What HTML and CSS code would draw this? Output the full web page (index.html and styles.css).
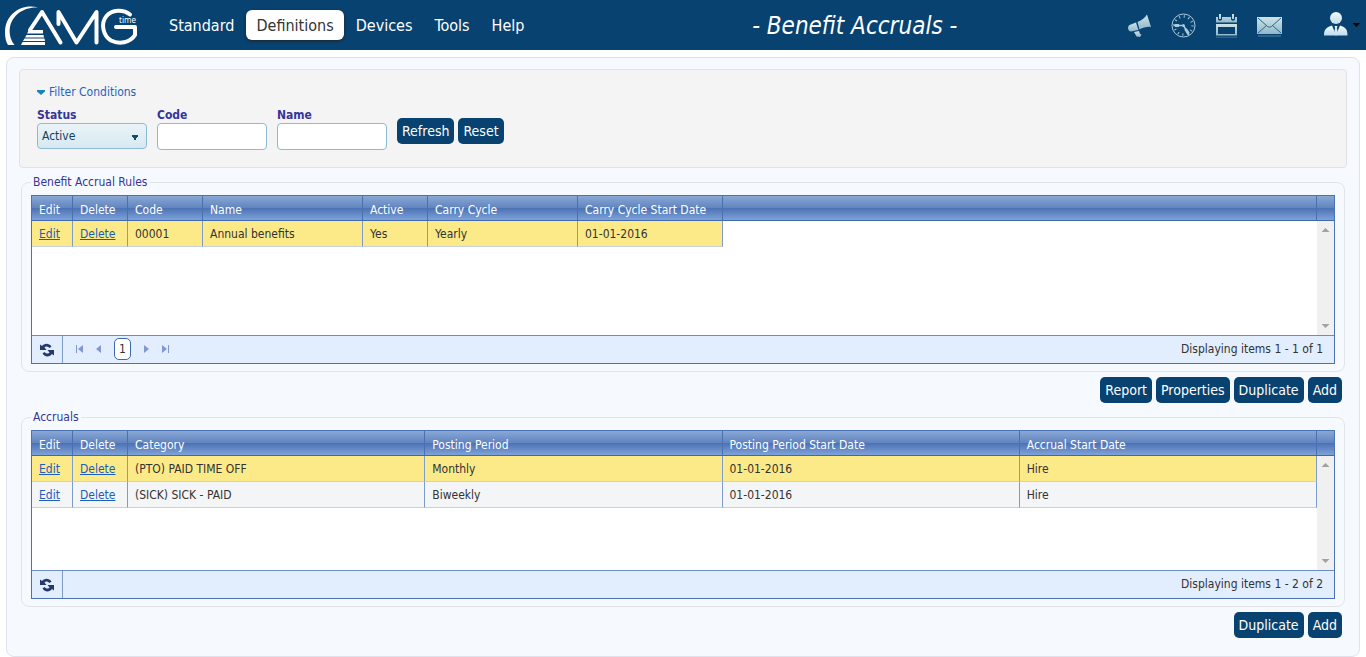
FILE: index.html
```html
<!DOCTYPE html>
<html lang="en">
<head>
<meta charset="utf-8">
<title>Benefit Accruals</title>
<link rel="stylesheet" href="styles.css">
</head>
<body>
<svg class="defs" width="0" height="0" aria-hidden="true">
  <defs>
    <linearGradient id="pale" x1="0" y1="0" x2="0" y2="1">
      <stop offset="0" stop-color="#cfe3e6"/><stop offset="1" stop-color="#8fb8cc"/>
    </linearGradient>
    <linearGradient id="person" x1="0" y1="0" x2="0" y2="1">
      <stop offset="0" stop-color="#f2f9fc"/><stop offset="1" stop-color="#bfdcec"/>
    </linearGradient>
    <symbol id="reload" viewBox="0 0 14 14">
      <path d="M0 1.500 2 3C4 0 9 -0.500 11.500 3.500L9.500 5C7.500 3 5.500 3 4.500 4.500L6.500 7H0Z" fill="#27396b"/>
      <path d="M14 12.500 12 11C10 14 5 14.500 2.500 10.500L4.500 9C6.500 11 8.500 11 9.500 9.500L7.500 7H14Z" fill="#27396b"/>
    </symbol>
  </defs>
</svg>

<header class="topbar">
  <a class="logo" href="#" aria-label="AMG time">
    <svg width="134" height="42" viewBox="0 0 134 42">
      <path d="M33 2.500C17-2 0 9 0 27 0 33 1 37 3 40H9.500C5 34 4 28 5 22 7 11 18 1.500 33 2.500Z" fill="#fff"/>
      <g fill="none" stroke="#fff" stroke-width="4" stroke-linecap="round" stroke-linejoin="round">
        <path d="M25 25 37 7 55.500 37.500"/>
        <path d="M53.500 19V7L71.500 37.500 91.500 7V37.500"/>
        <path d="M125 9.500C118 4 107 4.500 101.500 11 95 19 98.500 31 106 35.500 114 39.500 125 38 130 30V22H111"/>
      </g>
      <path d="M24 25H38V28.500H22ZM21.500 30H38.500L39 32.500H20ZM19.500 33.500H39.500L40 36H18ZM17.500 37H40V40H16Z" fill="#fff"/>
      <text class="logo-time" x="114" y="18">time</text>
    </svg>
  </a>
  <nav class="menu">
    <a href="#">Standard</a>
    <a class="current" href="#">Definitions</a>
    <a href="#">Devices</a>
    <a href="#">Tools</a>
    <a href="#">Help</a>
  </nav>
  <h1 class="title">- Benefit Accruals -</h1>
  <div class="tools">
    <button type="button" aria-label="Announcements">
      <svg width="25" height="25" viewBox="0 0 25 25" fill="url(#pale)">
        <path d="M9 9.500 2.500 12C0 14 1 18.500 4 18.500L11.500 17Z"/>
        <path d="M10.500 9C15 7 18 4.500 20 1.500L24 14C20 13.500 16.500 14.500 12.500 16.500Z"/>
        <path d="M7 19 12 18 13 21 14.500 21.500 13 24 9.500 23.500Z"/>
      </svg>
    </button>
    <button type="button" aria-label="Clock">
      <svg width="25" height="25" viewBox="0 0 25 25" fill="none" stroke="#a9cbd9">
        <circle cx="12.500" cy="12.500" r="11.500" stroke-width="1"/>
        <circle cx="12.500" cy="12.500" r="9" stroke-width="2.500" stroke-dasharray="1 3.712"/>
        <path d="M2.500 12.500H13" stroke-width="1.500"/>
        <path d="M4 12.500H8M14.500 16 17.500 20.500" stroke-width="3"/>
        <path d="M12.500 12.500 18 22" stroke-width="1.500"/>
        <circle cx="12.500" cy="12.500" r="1" fill="#a9cbd9"/>
      </svg>
    </button>
    <button type="button" aria-label="Calendar">
      <svg width="23" height="25" viewBox="0 0 23 25">
        <path d="M1 4H3V6.500Q5 9 7 6.500V4H16V6.500Q18 9 20 6.500V4H22V9.500H1ZM4 1H6V6H4ZM17 1H19V6H17Z" fill="url(#pale)"/>
        <path d="M1 11H22V22.500H1ZM3 14V21H20V14Z" fill="url(#pale)" fill-rule="evenodd"/>
        <path d="M1 23.500H22V25H1Z" fill="#2d6288"/>
      </svg>
    </button>
    <button type="button" aria-label="Mail">
      <svg width="25" height="25" viewBox="0 0 25 25">
        <path d="M0 4H25V21H0Z" fill="url(#pale)"/>
        <path d="M1 5 10.500 13.500Q12.500 15 14.500 13.500L24 5M1 20 9.500 12.500M24 20 15.500 12.500" fill="none" stroke="#2f6588"/>
        <path d="M1 22H24V24H1Z" fill="#2d6288"/>
      </svg>
    </button>
    <button class="account" type="button" aria-label="Account">
      <svg width="36" height="26" viewBox="0 0 36 26">
        <circle cx="12" cy="6" r="6" fill="url(#person)"/>
        <path d="M0 23.500C0 17.500 2 15.500 8 13.500L12 23 16 13.500C22 15.500 23.500 17.500 23.500 23.500Z" fill="url(#person)"/>
        <path d="M10.500 14H13.500L12.800 16 14 21 12 24 10 21 11.200 16Z" fill="url(#person)"/>
        <path d="M28.500 11H36L32.500 15Z" fill="#000"/>
      </svg>
    </button>
  </div>
</header>

<main class="page">
  <form class="filter">
    <button class="filter-toggle" type="button">
      <svg width="8" height="5" viewBox="0 0 8 5"><path d="M0 0H8V1.500L4 5 0 1.500Z" fill="#1784bd"/></svg>
      Filter Conditions
    </button>
    <div class="fields">
      <div class="field">
        <label for="status">Status</label>
        <select id="status"><option>Active</option></select>
      </div>
      <div class="field">
        <label for="code">Code</label>
        <input id="code" type="text">
      </div>
      <div class="field">
        <label for="name">Name</label>
        <input id="name" type="text">
      </div>
      <div class="buttons">
        <button class="btn" type="button">Refresh</button>
        <button class="btn" type="button">Reset</button>
      </div>
    </div>
  </form>

  <fieldset class="panel">
    <legend>Benefit Accrual Rules</legend>
    <div class="grid">
      <div class="grid-body">
        <table>
          <colgroup><col class="c-edit"><col class="c-delete"><col class="c-code"><col class="c-name"><col class="c-active"><col class="c-cycle"><col class="c-start"><col><col class="c-scroll"></colgroup>
          <thead><tr><th>Edit</th><th>Delete</th><th>Code</th><th>Name</th><th>Active</th><th>Carry Cycle</th><th>Carry Cycle Start Date</th><th></th><th></th></tr></thead>
          <tbody>
            <tr class="selected"><td><a href="#">Edit</a></td><td><a href="#">Delete</a></td><td>00001</td><td>Annual benefits</td><td>Yes</td><td>Yearly</td><td>01-01-2016</td><td class="blank"></td><td class="blank"></td></tr>
          </tbody>
        </table>
        <div class="scroll"><i class="up"></i><i class="down"></i></div>
      </div>
      <div class="pager">
        <button class="reload" type="button" aria-label="Reload"><svg width="14" height="14"><use href="#reload"/></svg></button>
        <div class="pages">
          <button type="button" aria-label="First page"><svg width="7" height="8" viewBox="0 0 7 8"><path d="M0 0H1V8H0ZM7 0V8L2 4Z"/></svg></button>
          <button type="button" aria-label="Previous page"><svg width="7" height="8" viewBox="0 0 7 8"><path d="M6 0V8L1 4Z"/></svg></button>
          <button class="number" type="button">1</button>
          <button type="button" aria-label="Next page"><svg width="7" height="8" viewBox="0 0 7 8"><path d="M1 0V8L6 4Z"/></svg></button>
          <button type="button" aria-label="Last page"><svg width="7" height="8" viewBox="0 0 7 8"><path d="M6 0H7V8H6ZM0 0V8L5 4Z"/></svg></button>
        </div>
        <span class="count">Displaying items 1 - 1 of 1</span>
      </div>
    </div>
  </fieldset>
  <div class="buttons actions">
    <button class="btn" type="button">Report</button>
    <button class="btn" type="button">Properties</button>
    <button class="btn" type="button">Duplicate</button>
    <button class="btn" type="button">Add</button>
  </div>

  <fieldset class="panel">
    <legend>Accruals</legend>
    <div class="grid">
      <div class="grid-body">
        <table>
          <colgroup><col class="c-edit"><col class="c-delete"><col><col><col><col><col class="c-scroll"></colgroup>
          <thead><tr><th>Edit</th><th>Delete</th><th>Category</th><th>Posting Period</th><th>Posting Period Start Date</th><th>Accrual Start Date</th><th></th></tr></thead>
          <tbody>
            <tr class="selected"><td><a href="#">Edit</a></td><td><a href="#">Delete</a></td><td>(PTO) PAID TIME OFF</td><td>Monthly</td><td>01-01-2016</td><td>Hire</td><td class="blank"></td></tr>
            <tr><td><a href="#">Edit</a></td><td><a href="#">Delete</a></td><td>(SICK) SICK - PAID</td><td>Biweekly</td><td>01-01-2016</td><td>Hire</td><td class="blank"></td></tr>
          </tbody>
        </table>
        <div class="scroll"><i class="up"></i><i class="down"></i></div>
      </div>
      <div class="pager">
        <button class="reload" type="button" aria-label="Reload"><svg width="14" height="14"><use href="#reload"/></svg></button>
        <span class="count">Displaying items 1 - 2 of 2</span>
      </div>
    </div>
  </fieldset>
  <div class="buttons actions">
    <button class="btn" type="button">Duplicate</button>
    <button class="btn" type="button">Add</button>
  </div>
</main>
</body>
</html>
```
FILE: styles.css
```css
* { box-sizing: border-box; }

body {
  margin: 0;
  background: #fff;
  color: #333;
  font: 12px/16px "DejaVu Sans Condensed", "Noto Sans", sans-serif;
}

button, input, select { font: inherit; }
button { border: 0; padding: 0; background: none; color: inherit; cursor: pointer; }
svg { display: block; flex: none; }
.defs { position: absolute; }

/* top bar */
.topbar {
  display: flex;
  align-items: center;
  height: 50px;
  padding: 0 6px 0 5px;
  background: #084270;
}
.logo { padding-top: 2px; }
.logo-time { fill: #fff; font: 8px "Noto Sans", sans-serif; }
.menu { display: flex; gap: 2px; margin-left: 20px; }
.menu a {
  height: 30px;
  padding: 0 10px;
  border-radius: 6px;
  color: #fff;
  font-size: 16px;
  line-height: 32px;
  text-decoration: none;
}
.menu .current { background: #fff; color: #333; box-shadow: 0 1px 3px #222; }
.title {
  flex: 1;
  margin: 0;
  padding: 1px 0 0 48px;
  color: #fff;
  font-size: 24px;
  font-style: italic;
  font-weight: normal;
  line-height: 48px;
  text-align: center;
}
.tools { display: flex; align-items: center; gap: 19px; }
.account { margin-left: 23px; }

/* page body */
.page {
  margin: 7px 6px 0;
  padding: 11px 12px 18px;
  border: 1px solid #dfe2ea;
  border-radius: 8px;
  background: #f6f9fe;
}
.filter {
  padding: 14px 17px 17px;
  border: 1px solid #e0e2e6;
  border-radius: 4px;
  background: #f4f4f4;
}
.filter-toggle { display: flex; align-items: center; gap: 4px; color: #2463c0; }
.fields { display: flex; gap: 10px; padding-top: 7px; }
.field { display: flex; flex-direction: column; width: 110px; }
.field label { color: #35359a; font-weight: bold; }
.field input, .field select {
  width: 100%;
  height: 27px;
  border: 1px solid #8dbbd3;
  border-radius: 4px;
  background: #fff;
}
.field select {
  appearance: none;
  height: 26px;
  padding: 0 4px;
  color: #124160;
  background:
    conic-gradient(from -30deg at 50% 100%, #0f5068 60deg, transparent 0) right 7px top 11px / 8px 6px no-repeat,
    linear-gradient(#eaf4f8, #d6e9f1);
}
.buttons { display: flex; gap: 4px; }
.fields .buttons { padding-top: 11px; }
.btn {
  height: 26px;
  padding: 0 5px;
  border-radius: 5px;
  background: #084270;
  color: #fff;
  font-size: 14px;
  line-height: 26px;
}

/* panels */
.panel {
  min-width: 0;
  margin: 6px 2px 5px;
  padding: 5px 9px 7px;
  border: 1px solid #e2e4e8;
  border-radius: 8px;
}
.panel legend { padding: 0 2px; color: #35359a; }
.actions { justify-content: flex-end; padding-right: 5px; }

/* data grids */
.grid { border: 1px solid #4a72b4; background: #fff; }
.grid-body { position: relative; min-height: 139px; }
table { width: 100%; table-layout: fixed; border-collapse: separate; border-spacing: 0; }
.c-edit { width: 41px; }
.c-delete { width: 55px; }
.c-code { width: 75px; }
.c-name { width: 160px; }
.c-active { width: 65px; }
.c-cycle { width: 150px; }
.c-start { width: 145px; }
.c-scroll { width: 17px; }
th, td { height: 26px; padding: 0 0 0 7px; text-align: left; white-space: nowrap; }
th {
  height: 25px;
  border-right: 1px solid #4a70b0;
  border-bottom: 1px solid #4068ac;
  padding-top: 4px;
  background: linear-gradient(#89a8d5, #6385c0 48%, #4d73b5 52%, #7ea2d8);
  color: #fff;
  font-weight: normal;
}
td { border-right: 1px solid #7f9bc8; border-bottom: 1px solid #c8d0e4; background: #f4f5f7; }
.selected td { background: #fbea87; }
.selected td.blank, td.blank { border: 0; background: none; }
th:last-child { border-right: 0; }
td a { color: #1d5dbb; }
.scroll {
  position: absolute;
  inset: 25px 0 0 auto;
  width: 17px;
  display: flex;
  flex-direction: column;
  justify-content: space-between;
  align-items: center;
  padding: 7px 0;
  background: #f0f0f0;
}
.up, .down { width: 8px; height: 4px; background: #a2a2a2; }
.up { clip-path: polygon(0 100%, 50% 0, 100% 100%); }
.down { clip-path: polygon(0 0, 50% 100%, 100% 0); }

.pager {
  display: flex;
  align-items: center;
  height: 28px;
  border-top: 1px solid #6e8cc4;
  background: #e2edfe;
}
.reload { display: flex; align-items: center; align-self: stretch; width: 31px; padding-left: 8px; border-right: 1px solid #7f9bc8; }
.pages { display: flex; align-items: center; gap: 12px; padding: 0 0 2px 13px; fill: #7f98d2; }
.number {
  width: 17px;
  height: 22px;
  border: 1px solid #3d68ab;
  border-radius: 5px;
  background: #fff;
  color: #333;
}
.count { margin-left: auto; padding: 0 11px 2px 0; }
```
